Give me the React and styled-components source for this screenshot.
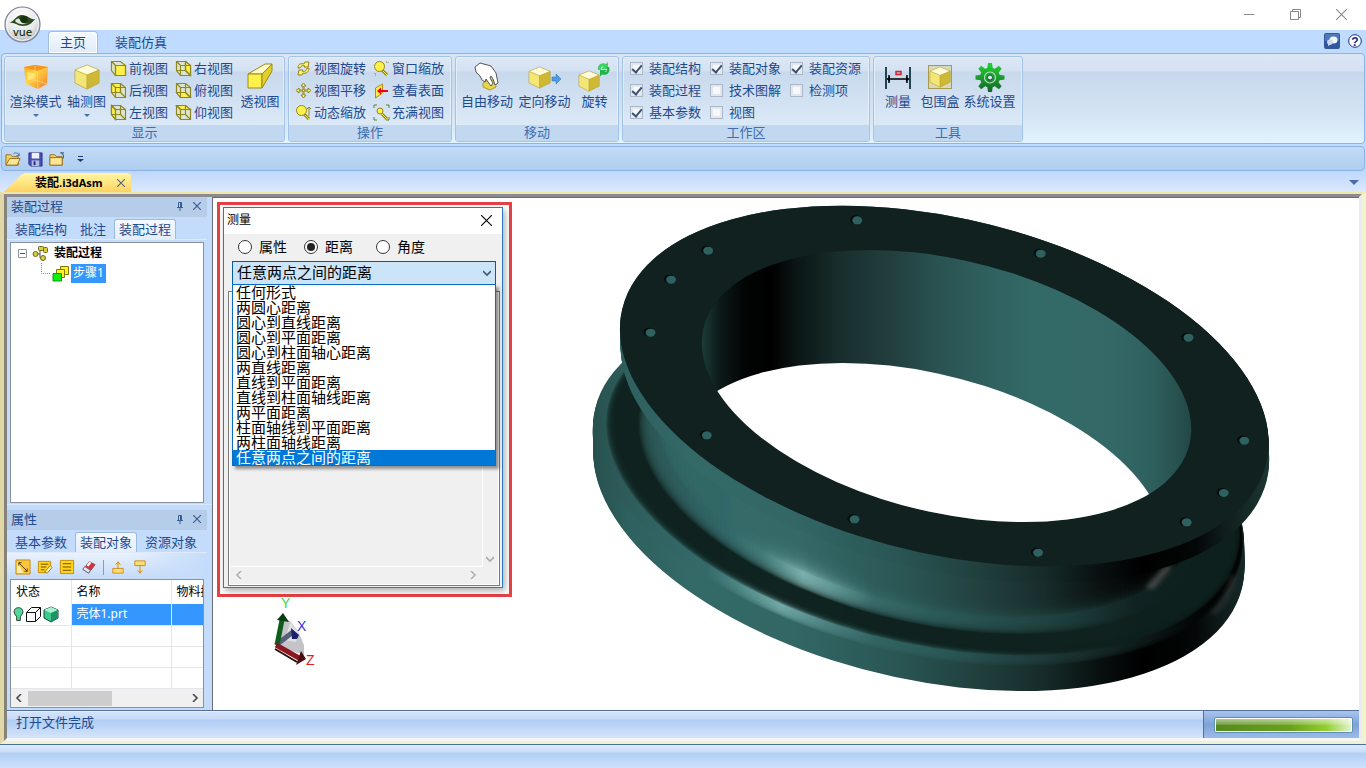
import React, { useState } from "react";
import styled, { createGlobalStyle, css } from "styled-components";

const Global = createGlobalStyle`
  * { box-sizing: border-box; }
  body { margin: 0; background: #bfdbff; overflow: hidden; }
  body, button, input, select, table {
    font-family: "Noto Sans", "Noto Sans CJK SC", "Liberation Sans", sans-serif;
    font-size: 13px;
    line-height: 18px;
    color: #1e4a8f;
  }
  button { background: none; border: 0; padding: 0; margin: 0; }
  svg { display: block; flex: none; }
`;

/* ---------- window chrome ---------- */

const Window = styled.div`
  display: flex;
  flex-direction: column;
  height: 100vh;
  min-width: 1040px;
  position: relative;
`;

const TitleBar = styled.header`
  display: flex;
  justify-content: flex-end;
  align-items: center;
  height: 30px;
  flex: none;
  background: #fff;
  padding: 0 18px 2px 0;
  gap: 32px;
`;

const WindowButton = styled.button`
  display: grid;
  place-items: center;
  width: 14px;
  height: 14px;
`;

const AppButton = styled.button`
  position: absolute;
  left: 4px;
  top: 6px;
  width: 38px;
  height: 38px;
  z-index: 2;
`;

const TabRow = styled.nav`
  display: flex;
  align-items: flex-end;
  height: 23px;
  flex: none;
  padding: 0 4px 0 48px;
  background: #bfdbff;
`;

const RibbonTab = styled.button`
  height: 22px;
  padding: 0 11px 2px;
  margin-right: 5px;
  border-radius: 4px 4px 0 0;
  border: 1px solid transparent;
  border-bottom: 0;
  ${(p) =>
    p.$active &&
    css`
      background: linear-gradient(#f4f9ff, #e0ebf8);
      border-color: #9cbfe8;
      box-shadow: inset 0 0 0 1px #fdfeff;
    `}
`;

const TabTools = styled.div`
  display: flex;
  gap: 8px;
  margin-left: auto;
  padding-bottom: 4px;
`;

const Ribbon = styled.section`
  display: flex;
  align-items: flex-start;
  gap: 3px;
  height: 91px;
  flex: none;
  margin: 0 1px;
  padding: 2px;
  border: 1px solid #8db2e3;
  border-radius: 4px;
  background: linear-gradient(#dbe6f4 0, #d5e1f2 17px, #c7d8ed 18px, #d4e4f4 60px, #e2f4fe 90px);
`;

const Group = styled.section`
  display: flex;
  flex-direction: column;
  width: ${(p) => p.$width}px;
  height: 86px;
  flex: none;
  border: 1px solid #a3c3e8;
  border-radius: 3px;
  overflow: hidden;
  background: linear-gradient(#dde8f5 0, #d4e1f2 14px, #c8d9ed 15px, #dbe9f7 68px);
  box-shadow: inset 0 0 0 1px #e4eefa;
`;

const GroupBody = styled.div`
  display: flex;
  flex: 1;
  padding: 0 ${(p) => p.$pad ?? 4}px;
  align-items: flex-start;
`;

const GroupTitle = styled.h2`
  margin: 0;
  height: 16px;
  line-height: 14px;
  font-size: 13px;
  font-weight: 400;
  text-align: center;
  color: #3e6db0;
  background: #c1d8f0;
`;

const BigButton = styled.button`
  display: flex;
  flex-direction: column;
  align-items: center;
  width: ${(p) => p.$width}px;
  padding-top: 5px;
  white-space: nowrap;
  line-height: 18px;
`;

const Caret = styled.i`
  border: 3px solid transparent;
  border-top-color: #4b6ea6;
  border-bottom: 0;
  margin-top: 4px;
`;

const SmallGrid = styled.div`
  display: grid;
  grid-auto-flow: column;
  grid-template-rows: repeat(3, 22px);
  grid-auto-columns: ${(p) => p.$col}px;
`;

const SmallButton = styled.button`
  display: flex;
  align-items: center;
  gap: 2px;
  white-space: nowrap;
`;

const CheckLabel = styled.label`
  display: flex;
  align-items: center;
  gap: 6px;
  white-space: nowrap;
`;

const Check = styled.input.attrs({ type: "checkbox" })`
  appearance: none;
  margin: 0;
  width: 13px;
  height: 13px;
  border: 1px solid #abb6c6;
  background: #f6f8fb;
  box-shadow: inset 0 0 0 2px #e3e8ef;
  display: grid;
  justify-items: center;
  &:checked::after {
    content: "";
    width: 4px;
    height: 8px;
    border: solid #3f5272;
    border-width: 0 2px 2px 0;
    transform: rotate(40deg);
  }
`;

const QuickBar = styled.div`
  display: flex;
  align-items: center;
  gap: 6px;
  height: 25px;
  flex: none;
  margin: 2px 1px 0;
  padding: 0 3px;
  border: 1px solid #8db2e3;
  border-radius: 4px;
  background: linear-gradient(#c3dbf7, #aecdf0);
`;

const QuickButton = styled.button`
  width: 16px;
  height: 16px;
`;

const QuickMenu = styled.button`
  margin-left: 6px;
`;

const DocTabs = styled.div`
  display: flex;
  align-items: flex-end;
  height: 21px;
  flex: none;
  padding: 0 7px 0 4px;
  background: linear-gradient(#bed7fb, #dbe9fd);
`;

const DocTab = styled.div`
  display: flex;
  align-items: center;
  justify-content: space-between;
  width: 127px;
  height: 19px;
  padding: 0 6px 0 31px;
  background: linear-gradient(#fff6a4, #ffe27c 60%, #ffd062);
  clip-path: polygon(0 100%, 17px 2px, 21px 0, 124px 0, 100% 2px, 100% 100%);
  font: 700 12px/16px "Open Sans", "Noto Sans CJK SC", sans-serif;
  color: #000;
  white-space: nowrap;
  span { font-size: 11px; }
`;

const DocMenu = styled.button`
  margin: 0 0 7px auto;
  border: 5px solid transparent;
  border-top-color: #4a6aa8;
  border-bottom: 0;
`;

const Frame = styled.div`
  display: flex;
  flex: 1;
  flex-direction: column;
  min-height: 0;
  border: solid;
  border-width: 2px 4px 3px 4px;
  border-color: #eee8a8 #eff3cf #f0f2c8 #e2d7a6;
`;

const FrameInner = styled.main`
  display: flex;
  flex: 1;
  flex-direction: column;
  min-height: 0;
  border: solid;
  border-width: 3px;
  border-color: #8d8b91 #e9eaf4 #f4f6fa #85837c;
`;

const Workspace = styled.div`
  display: flex;
  flex: 1;
  min-height: 0;
`;

const Dock = styled.aside`
  display: flex;
  flex-direction: column;
  width: 205px;
  flex: none;
  background: #c4dcfb;
`;

const Pane = styled.section`
  display: flex;
  flex-direction: column;
  margin-right: 5px;
  ${(p) => (p.$grow ? "flex: 1; min-height: 0;" : "flex: none;")}
`;

const PaneHead = styled.div`
  display: flex;
  align-items: center;
  gap: 9px;
  height: 20px;
  padding: 0 6px 2px 4px;
  background: #b6cdea;
  h3 { margin: 0 auto 0 0; font-size: 13px; font-weight: 400; }
`;

const PaneTabs = styled.div`
  display: flex;
  align-items: flex-end;
  height: 23px;
  padding-left: 3px;
  border-bottom: 1px solid #dfeafa;
`;

const PaneTab = styled.button`
  height: 20px;
  padding: 0 4px 2px;
  border: 1px solid transparent;
  border-bottom: 0;
  border-radius: 3px 3px 0 0;
  white-space: nowrap;
  margin-right: 3px;
  ${(p) => p.$active && "background: linear-gradient(#f5f9ff, #e3edfb); border-color: #9bbbe2;"}
`;

const TreeBox = styled.div`
  flex: 1;
  margin: 2px 3px 0;
  padding: 0 7px;
  border: 1px solid #8a929c;
  background: #fff;
  color: #000;
  font-size: 12px;
`;

const TreeRow = styled.div`
  display: flex;
  align-items: center;
  gap: ${(p) => p.$gap}px;
  height: 20px;
  padding-left: ${(p) => p.$indent || 0}px;
  b { font-weight: 700; }
`;

const Selected = styled.span`
  background: #3397fd;
  color: #fff;
  padding: 0 2px;
  height: 19px;
  line-height: 18px;
`;

const Splitter = styled.div`
  height: 6px;
  margin-top: 1px;
  flex: none;
  border-top: 1px solid #dce9fb;
`;

const IconBar = styled.div`
  display: flex;
  align-items: center;
  gap: 6px;
  height: 26px;
  padding: 2px 0 0 8px;
  background: linear-gradient(90deg, transparent 60%, #c4dcfb), linear-gradient(#eaf2fd, #c5daf7);
`;

const Divider = styled.i`
  width: 1px;
  height: 15px;
  background: #7c9fcb;
`;

const TableBox = styled.div`
  height: 129px;
  margin: 0 3px 2px;
  border: 1px solid #8a929c;
  background: #fff;
  overflow: hidden;
  display: flex;
  flex-direction: column;
`;

const TableClip = styled.div`
  flex: 1;
  overflow: hidden;
`;

const Table = styled.table`
  table-layout: fixed;
  width: 279px;
  border-collapse: collapse;
  font-size: 12px;
  color: #000;
  th, td {
    height: 21px;
    padding: 0 5px;
    text-align: left;
    font-weight: 400;
    font-size: 12px;
    white-space: nowrap;
    border: solid #e3e6ea;
    border-width: 0 1px 1px 0;
  }
  th { height: 24px; border-bottom: 0; }
`;

const SelCell = styled.td`
  background: #3397fd;
  color: #fff;
`;

const StateCell = styled.td`
  && { padding: 0 2px; }
  div { display: flex; gap: 1px; }
`;

const ScrollX = styled.div`
  display: flex;
  align-items: center;
  justify-content: space-between;
  height: ${(p) => p.$h}px;
  padding: 0 4px;
  background: #f0f0f0;
`;

const Thumb = styled.div`
  width: 84px;
  height: 15px;
  margin: 0 auto 0 5px;
  background: #cdcdcd;
`;

const Viewport = styled.section`
  position: relative;
  flex: 1;
  min-width: 0;
  background: #fff;
  border: solid #6b6b78;
  border-width: 1px 0 0 1px;
  overflow: hidden;
`;

const Scene = styled.svg`
  width: 100%;
  height: 100%;
`;

const StatusBar = styled.footer`
  display: flex;
  height: 28px;
  flex: none;
  border-top: 1px solid #54709b;
  background: linear-gradient(#f4f8fe 0, #d3e3fa 1px, #c5dbf8 8px, #afcdf4 9px, #d6e5fb 27px);
`;

const StatusText = styled.span`
  flex: 1;
  padding: 2px 9px;
`;

const StatusEnd = styled.div`
  width: 156px;
  padding: 6px 6px 0 10px;
  border-left: 1px solid #54709b;
  background: linear-gradient(#a9c4ee, #7ea2d8 50%, #9dbbe9);
`;

const Progress = styled.progress`
  appearance: none;
  display: block;
  width: 100%;
  height: 16px;
  border: 1px solid #5b91b6;
  border-radius: 2px;
  background: #fff;
  padding: 1px;
  &::-webkit-progress-bar { background: #fff; }
  &::-webkit-progress-value {
    background: linear-gradient(#ffffff88, #ffffff33 45%, transparent 50%),
      linear-gradient(90deg, #568a1c, #69a11c 55%, #93cf30 82%, #e3f4cc);
  }
`;

const BottomBar = styled.div`
  height: 24px;
  flex: none;
  border-top: 1px solid #4e709f;
  background: linear-gradient(#dce8fb 0, #cbdff8 7px, #b0cef5 8px, #d2e3fb 24px);
`;

/* ---------- measure dialog ---------- */

const Highlight = styled.div`
  position: absolute;
  left: 4px;
  top: 4px;
  padding: 3px;
  border: 3px solid #e84044;
`;

const Dialog = styled.section`
  display: flex;
  flex-direction: column;
  width: 280px;
  height: 381px;
  margin: -1px 3px 3px 0;
  border: 1px solid #2a7ac2;
  background: #f0f0f0;
  box-shadow: 2px 3px 7px #0005;
  color: #000;
`;

const DialogHead = styled.div`
  display: flex;
  align-items: center;
  justify-content: space-between;
  height: 26px;
  padding: 0 10px 2px 3px;
  background: #fff;
  h3 { margin: 0; font-size: 12px; font-weight: 400; }
`;

const Radios = styled.div`
  display: flex;
  height: 27px;
  padding: 0 0 2px 14px;
`;

const RadioLabel = styled.label`
  display: flex;
  align-items: center;
  gap: 7px;
  width: ${(p) => p.$width}px;
  font-size: 14px;
  color: #000;
`;

const Radio = styled.input.attrs({ type: "radio" })`
  appearance: none;
  width: 14px;
  height: 14px;
  margin: 0;
  border: 1px solid #333;
  border-radius: 50%;
  background: #fff;
  display: grid;
  place-items: center;
  &:checked::after {
    content: "";
    width: 8px;
    height: 8px;
    border-radius: 50%;
    background: #222;
  }
`;

const Combo = styled.div`
  position: relative;
  height: 24px;
  margin: 0 6px 0 8px;
  select {
    appearance: none;
    width: 100%;
    height: 24px;
    padding: 0 4px 2px;
    border: 1px solid #0a5a9e;
    border-radius: 0;
    background: #cce4f7;
    color: #000;
    font-size: 15px;
  }
  > svg { position: absolute; right: 5px; top: 8px; pointer-events: none; }
`;

const Options = styled.ul`
  position: absolute;
  z-index: 3;
  left: 0;
  right: 0;
  top: 23px;
  margin: 0;
  padding: 0;
  list-style: none;
  border: 1px solid #0a6cbc;
  background: #fff;
  box-shadow: 3px 3px 3px #0006;
`;

const Option = styled.li`
  height: 15px;
  padding: 0 3px;
  font-size: 15px;
  line-height: 15px;
  color: ${(p) => (p.$on ? "#fff" : "#000")};
  background: ${(p) => (p.$on ? "#0078d7" : "transparent")};
`;

const ResultBox = styled.div`
  display: flex;
  flex-direction: column;
  flex: 1;
  margin: 6px 2px 1px 4px;
  padding: 2px;
  border: 1px solid #7a7a7a;
  box-shadow: inset 0 0 0 1px #fff;
`;

const ResultRow = styled.div`
  display: flex;
  flex: 1;
  align-items: flex-end;
  justify-content: flex-end;
`;

const ResultArea = styled.div`
  flex: 1;
  align-self: stretch;
  border: solid #fff;
  border-width: 0 1px 1px 0;
`;

const ResultScroll = styled.div`
  padding: 0 3px 4px;
`;

const ResultScrollEnd = styled.span`
  margin-right: 16px;
`;

/* ---------- icons ---------- */

const olive = "#8f8620";

const FACES = {
  front: "5.5,5.5 15.5,5.5 15.5,15.5 5.5,15.5",
  back: "1.5,1.5 10.5,1.5 10.5,10.5 1.5,10.5",
  left: "1.5,1.5 5.5,5.5 5.5,15.5 1.5,10.5",
  right: "10.5,1.5 15.5,5.5 15.5,15.5 10.5,10.5",
  bottom: "1.5,10.5 10.5,10.5 15.5,15.5 5.5,15.5",
  top: "1.5,1.5 10.5,1.5 15.5,5.5 5.5,5.5",
};

const ViewIcon = ({ face }) => (
  <svg width="17" height="17" viewBox="0 0 17 17" fill="none" stroke={olive} strokeWidth="1.2">
    <path d="M1.500 1.500H10.500L15.500 5.500V15.500H5.500L1.500 10.500Z" fill="#dce6cf" />
    <polygon points={FACES[face]} fill="#fff04a" />
    {face !== "front" && <path d="M1.500 10.500H10.500V1.500M10.500 10.500L15.500 15.500" />}
    <path d="M5.500 15.500V5.500H15.500M1.500 1.500L5.500 5.500" />
  </svg>
);

const CubeShape = ({ x = 0, y = 0, s = 1 }) => (
  <g transform={`translate(${x} ${y}) scale(${s})`} stroke="#b5a23c" strokeWidth=".5" strokeLinejoin="round">
    <path d="M12 0L24 5V18L12 24L0 18V5Z" fill="#e5d44c" />
    <path d="M12 0L24 5L12 10L0 5Z" fill="#fffbd8" />
    <path d="M0 5L12 10V24L0 18Z" fill="#f3e674" />
    <path d="M24 5L12 10V24L24 18Z" fill="#cfb834" />
  </g>
);

const Big = ({ children, w = 30 }) => (
  <svg width={w} height="30" viewBox={`0 0 ${w} 30`} fill="none">{children}</svg>
);

const RenderIcon = () => (
  <Big>
    <defs>
      <linearGradient id="flame" x2="1" y2="1">
        <stop offset="0" stopColor="#fba61e" />
        <stop offset=".4" stopColor="#ffd648" />
        <stop offset=".7" stopColor="#f9a838" />
        <stop offset="1" stopColor="#ee7a35" />
      </linearGradient>
    </defs>
    <path d="M3 5L14 3L27 5L26 22L17 27L5 22Z" fill="url(#flame)" />
    <path d="M3 5L16 9L27 5L14 3Z" fill="#f8941c" />
    <path d="M16 9L17 27M5 22L14 18L26 22M14 18V4" stroke="#ffd870" strokeWidth=".7" />
    <path d="M6 10L14 12L13 17L7 18Z" fill="#fff08a" opacity=".7" />
  </Big>
);
const AxonIcon = () => <Big><CubeShape x={3} y={3} /></Big>;
const PerspectiveIcon = () => (
  <Big>
    <g stroke="#9a8a18" strokeLinejoin="round">
      <path d="M3 12L20 2H27L17 12Z" fill="#fffbc8" />
      <path d="M3 12H17V26H3Z" fill="#fff04a" />
      <path d="M17 12L27 2V9L17 26Z" fill="#e3cf2c" />
    </g>
  </Big>
);
const FreeMoveIcon = () => (
  <Big>
    <path d="M11 21L16 18H21L24 21V25L18 28L11 25Z" fill="#e8d648" stroke="#b09b30" />
    <path d="M3 5L8 1L19 4L24 11L26 21L23 23L21 17L19 14L18 16L21 21L19 24L16 20L14 17L13 20L10 18L8 14L4 10Z" fill="#fff" stroke="#555" strokeLinejoin="round" />
  </Big>
);
const DirMoveIcon = () => (
  <Big w={36}>
    <CubeShape x={2} y={5} s={0.88} />
    <path d="M25 15H29V12L34 17L29 22V19H25Z" fill="#4d9be0" stroke="#3579bd" strokeWidth=".6" />
  </Big>
);
const RotateIcon = () => (
  <Big w={34}>
    <CubeShape x={1} y={9} s={0.84} />
    <path d="M20 8C19 3 24 0 28 2L30 0V7H23L26 4.500C24 4 22 5 23 8Z" fill="#3fd064" />
    <path d="M31 5C33 10 29 14 24 12.500L22 14.500V8H29L26.500 10C29 10 30 8 28.500 5Z" fill="#1fb445" />
  </Big>
);
const MeasureIcon = () => (
  <Big w={28}>
    <path d="M2 5V27M26 5V27" stroke="#1f4650" strokeWidth="2" />
    <path d="M3 17H25M5 13V21M23 13V21" stroke="#000" strokeWidth="1.500" />
    <path d="M3 17L6 14V20ZM25 17L22 14V20Z" fill="#000" />
    <path d="M12 9.500H17V12.500H12Z" fill="#c8b8a8" stroke="#d0213a" strokeWidth="1.500" />
  </Big>
);
const BoxIcon = () => (
  <Big>
    <rect x="3.500" y="3.500" width="23" height="23" fill="#d6d9bc" stroke="#a89a50" />
    <CubeShape x={5} y={5} s={0.84} />
  </Big>
);
const GearIcon = () => (
  <Big>
    <defs>
      <linearGradient id="gearFill" gradientUnits="userSpaceOnUse" x1="0" x2="0" y1="0" y2="30">
        <stop offset="0" stopColor="#23d832" />
        <stop offset="1" stopColor="#14642a" />
      </linearGradient>
      <mask id="gearMask" maskUnits="userSpaceOnUse" x="0" y="0" width="30" height="31">
        {[0, 45, 90, 135, 180, 225, 270, 315].map((a) => (
          <path key={a} d="M12 8L13 1H17L18 8Z" fill="#fff" transform={`rotate(${a} 15 15.500)`} />
        ))}
        <circle cx="15" cy="15.500" r="10" fill="#fff" />
      </mask>
    </defs>
    <rect width="30" height="31" fill="url(#gearFill)" mask="url(#gearMask)" />
    <circle cx="15" cy="15.500" r="5.500" stroke="#b9dcc0" strokeWidth="1.200" />
    <circle cx="15" cy="15.500" r="2.500" fill="#dbe7f3" stroke="#0c5c28" />
  </Big>
);

const Small = ({ children, size = 17 }) => (
  <svg width={size} height={size} viewBox="0 0 17 17" fill="none">{children}</svg>
);

const RotateViewIcon = () => (
  <Small>
    <g fill="#fff27a" stroke={olive} strokeLinejoin="round">
      <path d="M3 8C3 4 6 3 9 4L10 2L14 2L13 7L9 7L10 6C7 5 6 6 5 8Z" />
      <path d="M14 8C14 12 11 14 8 13L7 15H3L4 10H8L7 11C10 12 11 11 12 8Z" />
    </g>
  </Small>
);
const PanIcon = () => (
  <Small>
    <path d="M8.500 1L11 4H9V8H13V6L16 8.500L13 11V9H9V13H11L8.500 16L6 13H8V9H4V11L1 8.500L4 6V8H8V4H6Z" fill="#fff27a" stroke={olive} strokeLinejoin="round" />
  </Small>
);
const ZoomIcon = ({ kind }) => (
  <Small>
    <path d="M9 10L14 15" stroke={olive} strokeWidth="3" />
    <path d="M9 10L14 15" stroke="#ffe94a" strokeWidth="1" />
    <circle cx={kind === "fit" ? 7 : 6.5} cy={kind === "fit" ? 7 : 6.5} r={kind === "fit" ? 3 : 5} fill="#fff04a" stroke={olive} />
    {kind !== "fit" && <path d="M4 5L6 3" stroke="#fff" />}
    {kind === "window" && <path d="M13 2H15V4M2 13V15H4" stroke={olive} strokeDasharray="1 1" />}
    {kind === "dynamic" && <path d="M14 3V12M12 5L14 3L16 5" stroke={olive} />}
    {kind === "fit" && <path d="M1 4V1H4M13 1H16V4M16 13V16H13M4 16H1V13" stroke="#5d7f3a" />}
  </Small>
);
const FaceIcon = () => (
  <Small>
    <path d="M2.500 6L9.500 2V11L2.500 16Z" fill="#ffe94a" stroke="#b38a10" />
    <path d="M6 9H15" stroke="#f00010" strokeWidth="1.800" />
    <path d="M4 9L8 5.500V12.500Z" fill="#f00010" />
  </Small>
);

const FolderIcon = ({ open }) => (
  <Small size={16}>
    <path d="M1 4H6L8 6H14V15H1Z" fill="#f4cf63" stroke="#94701c" />
    <path d={open ? "M1 15L5 8H16L13 15Z" : "M1 7H14V15H1Z"} fill="#ffe596" stroke="#94701c" />
    {open ? <path d="M9 3C11 1 14 2 15 5M15 2V5H12" stroke="#4b6d9e" /> : <path d="M12 2H16M13 2C15 3 16 5 15 8" stroke="#2c466d" />}
  </Small>
);
const SaveIcon = () => (
  <Small size={16}>
    <path d="M2 2H16V16H4L2 14Z" fill="#4551b5" stroke="#2b3180" />
    <path d="M5 2H13V8H5Z" fill="#eef2fb" />
    <path d="M5 10H13V16H5Z" fill="#b4bce4" />
    <path d="M7 11H9V15H7Z" fill="#262c70" />
  </Small>
);
const MoreIcon = () => (
  <svg width="7" height="8" viewBox="0 0 7 8"><path d="M1 1.500H6" stroke="#1c3d74" /><path d="M0 4H7L3.500 7Z" fill="#1c3d74" /></svg>
);

const CrossIcon = ({ size = 8, color = "#3c5c93", width = 1.5 }) => (
  <svg width={size} height={size} viewBox="0 0 10 10" stroke={color} strokeWidth={width}><path d="M0 0L10 10M10 0L0 10" /></svg>
);
const PinIcon = () => (
  <svg width="8" height="9" viewBox="0 0 8 9" fill="none" stroke="#3c5c93"><path d="M2.500 5V.5H5.500V5M1 5.500H7M4 6V9M4.500 1V5" /></svg>
);
const CHEVRONS = { left: "M6 0L2 4L6 8", right: "M2 0L6 4L2 8", down: "M0 2L4 6L8 2" };
const Chevron = ({ dir = "left", color = "#4a4a4a" }) => (
  <svg width="8" height="8" viewBox="0 0 8 8" fill="none" stroke={color} strokeWidth="1.600"><path d={CHEVRONS[dir]} /></svg>
);

const AppLogo = () => (
  <svg width="38" height="38" viewBox="0 0 38 38">
    <defs>
      <radialGradient id="orb" cx=".45" cy=".3" r=".75">
        <stop offset="0" stopColor="#fff" />
        <stop offset=".6" stopColor="#e7e8e9" />
        <stop offset="1" stopColor="#a9acb5" />
      </radialGradient>
    </defs>
    <circle cx="18.500" cy="18.500" r="17.500" fill="url(#orb)" stroke="#7b7f92" strokeWidth="1.200" />
    <circle cx="18.500" cy="18.500" r="16" fill="none" stroke="#fff" opacity=".8" />
    <path d="M5 17C11 15 12 9 18 9C24 9 26 14 31 13C28 17 25 20 19 20C13 20 11 16 5 17Z" fill="#2b4a22" />
    <path d="M11 15C13 12 15 12 16 14C17 17 21 18 24 17C20 19 14 19 11 15Z" fill="#dfe5d8" />
    <circle cx="20" cy="13.500" r="3.500" fill="#17300f" />
    <text x="18.500" y="29.500" textAnchor="middle" fontFamily="Open Sans, sans-serif" fontWeight="600" fontSize="11" fill="#1f3a17">vue</text>
  </svg>
);

const ChatIcon = () => (
  <svg width="16" height="16" viewBox="0 0 16 16">
    <rect width="16" height="16" rx="2" fill="#31589f" />
    <rect x="1" y="1" width="14" height="7" rx="1" fill="#5079ba" />
    <ellipse cx="9.500" cy="7" rx="4" ry="3.500" fill="#f3f7fd" />
    <ellipse cx="6" cy="9" rx="3" ry="2.500" fill="#c8daf2" />
    <path d="M4 10L4 13L8 11Z" fill="#c8daf2" />
  </svg>
);
const HelpIcon = () => (
  <svg width="14" height="16" viewBox="0 0 14 16">
    <circle cx="7" cy="8" r="6.300" fill="#fff" stroke="#14327c" />
    <text x="7" y="12.500" textAnchor="middle" fontFamily="Liberation Sans, sans-serif" fontWeight="700" fontSize="12" fill="#0e2c86">?</text>
  </svg>
);

const NodesIcon = () => (
  <Small size={17}>
    <path d="M3 9H8M8 4V13M8 4H12M8 13H11" stroke="#555" />
    <g fill="#d9cf3a" stroke="#6e671a"><circle cx="3.500" cy="9" r="2.500" /><rect x="6.500" y="1.500" width="5" height="4" rx="1" /><rect x="11.500" y="2.500" width="4" height="5" rx="1" /><circle cx="11" cy="13" r="2.500" /></g>
  </Small>
);
const StepIcon = () => (
  <Small size={17}>
    <g stroke="#7d7a10"><path d="M8.500 1.500H16.500V9.500H8.500Z" fill="#fff21c" /><path d="M4.500 4.500H12.500V12.500H4.500Z" fill="#fff21c" /><path d="M1 8.500H9.500V16H1Z" fill="#0df20d" stroke="#1c8a1c" /></g>
  </Small>
);
const ExpandBox = () => (
  <svg width="9" height="9" viewBox="0 0 9 9" fill="#fff" stroke="#8896a8"><path d="M.5.5H8.500V8.500H.5Z" /><path d="M2 4.500H7" stroke="#34518b" /></svg>
);

const NoteIcon = ({ kind }) => (
  <Small size={16}>
    {kind === "link" && (
      <g><path d="M1 1H16V16H1Z" fill="#f9c63d" stroke="#c98a12" /><path d="M2 2L9 15H2Z" fill="#fff0a8" /><path d="M4 4L13 13M4 4H7M4 4V7M13 13H10M13 13V10" stroke="#5a3b08" /></g>
    )}
    {kind === "edit" && (
      <g><path d="M1.500 2.500H14.500V9L9 14.500H1.500Z" fill="#ffd41a" stroke="#c58b00" /><path d="M4 5.500H12M4 8.500H10M4 11.500H8" stroke="#6b4a00" /><path d="M8 14L14 7L16 9L11 15Z" fill="#f6efb0" stroke="#9c7a1a" /></g>
    )}
    {kind === "list" && (
      <g><path d="M1.500 1.500H15.500V15.500H1.500Z" fill="#ffd41a" stroke="#c58b00" /><path d="M4 5H13M4 8.500H13M4 12H13" stroke="#6b4a00" /></g>
    )}
    {kind === "erase" && (
      <g strokeLinejoin="round"><path d="M2 11L9 3L15 6L8 15Z" fill="#d0353a" stroke="#93403a" /><path d="M6 7L9 3L11 4L8 8Z" fill="#fff" /><path d="M2 11L4 8L10 12L8 15Z" fill="#e8e9f2" stroke="#6a6a90" /></g>
    )}
    {kind === "up" && <path d="M3 15V10H14V15ZM8.500 10V3M6 6L8.500 3L11 6" fill="#ffdf6d" stroke="#d08a1a" />}
    {kind === "down" && <path d="M3 2H14V7H3ZM8.500 7V15M6 12L8.500 15L11 12" fill="#ffdf6d" stroke="#d08a1a" />}
  </Small>
);

const StateIcons = () => (
  <div>
    <svg width="11" height="17" viewBox="0 0 12 17"><path d="M6 1C2 1 0 5 2 8L4 11V15H8V11L10 8C12 5 10 1 6 1Z" fill="#55d69a" stroke="#1c3b2e" /></svg>
    <svg width="17" height="17" viewBox="0 0 17 17" fill="#fff" stroke="#111"><path d="M1.500 6.500L6.500 1.500H15.500V10.500L10.500 15.500H1.500Z" /><path d="M1.500 6.500H10.500V15.500M10.500 6.500L15.500 1.500" fill="none" /></svg>
    <svg width="16" height="17" viewBox="0 0 16 17" stroke="#174b38"><path d="M8 1L15 4V12L8 16L1 12V4Z" fill="#3cc98c" /><path d="M8 1L15 4L8 7L1 4Z" fill="#a9f0d0" stroke="none" /><path d="M15 4V12L8 16V7Z" fill="#209364" stroke="none" /></svg>
  </div>
);

/* ---------- 3D scene ---------- */

const FULL = { rx: 764, ry: 490 };

const Disc = ({ d = 0, s = 1, dx = 0, ...rest }) => (
  <ellipse
    rx={FULL.rx * s}
    ry={FULL.ry * s}
    transform={`translate(${816 + dx - 0.153 * d} ${573 + d}) rotate(23.3)`}
    {...rest}
  />
);

const steps = (n, fn) => Array.from({ length: n }, (_, i) => fn(i / (n - 1), i));

const GRADIENTS = {
  side: [[30, "#27504e"], [110, "#2e615f"], [250, "#336967"], [480, "#326765"], [700, "#2a5755"], [880, "#21413f"], [1040, "#162b2a"], [1160, "#091110"], [1260, "#000000"], [1380, "#040707"], [1450, "#101f1e"], [1545, "#1b3634"]],
  fillet: [[30, "#274f4d"], [150, "#2c5957"], [330, "#33696a"], [410, "#447d7b"], [500, "#7db3b0"], [560, "#669d9a"], [660, "#396c6a"], [800, "#2c5c5a"], [950, "#264d4b"], [1100, "#1e3e3c"], [1250, "#122423"], [1400, "#0f1e1d"], [1490, "#000000"]],
  edge: [[30, "#285250"], [150, "#2f605e"], [280, "#34696a"], [370, "#558e8b"], [450, "#75aba8"], [550, "#4f8482"], [660, "#336563"], [820, "#2b5957"], [1000, "#213f3e"], [1130, "#182e2d"], [1260, "#0e1b1a"], [1390, "#020404"], [1490, "#000000"]],
  bore: [[274, "#1c3a38"], [315, "#0c1818"], [370, "#020404"], [430, "#000000"], [480, "#0a1413"], [580, "#182e2d"], [700, "#223f3e"], [800, "#295251"], [900, "#2e5f5d"], [1020, "#336a68"], [1200, "#336866"], [1290, "#2d5e5c"], [1369, "#234846"]],
};

const HOLES = [[620, 75], [286, 166], [203, 253], [157, 412], [283, 720], [614, 972], [1025, 1072], [1358, 981], [1441, 893], [1487, 736], [1362, 427], [1031, 175]];

/* Discs painted through a clip so that one horizontal shading runs across all of them. */
const ShadedDiscs = ({ fill, opacity = 1, children }) =>
  children.map((p, i) => {
    const id = `${fill}-${Math.round(p.d * 10)}-${i}`;
    return (
      <g key={id}>
        <clipPath id={id}><Disc {...p} /></clipPath>
        <rect width="1600" height="1520" fill={`url(#${fill})`} clipPath={`url(#${id})`} opacity={opacity} />
      </g>
    );
  });

const Ring = () => (
  <g transform="translate(580 195) scale(.44643 .33333)">
    <defs>
      {Object.entries(GRADIENTS).map(([id, stops]) => (
        <linearGradient key={id} id={id} gradientUnits="userSpaceOnUse" x1="0" x2="1600">
          {stops.map(([x, c]) => <stop key={x} offset={x / 1600} stopColor={c} />)}
        </linearGradient>
      ))}
      <mask id="bodyMask" maskUnits="userSpaceOnUse" x="0" y="0" width="1600" height="1520">
        <rect width="1600" height="1520" fill="#fff" />
        <g clipPath="url(#boreTop)"><Disc d={339} s={0.753} dx={-3} fill="#000" /></g>
      </mask>
      <clipPath id="boreTop"><Disc s={0.753} dx={5} /></clipPath>
      <filter id="soft" x="-50%" y="-50%" width="200%" height="200%"><feGaussianBlur stdDeviation="7" /></filter>
    </defs>
    <g mask="url(#bodyMask)">
      <ShadedDiscs fill="side">{steps(20, (t) => ({ d: 372 - 72 * t, s: 1.002, dx: -12 * t }))}</ShadedDiscs>
      <ShadedDiscs fill="edge" opacity={0.3}>{steps(10, (t) => ({ d: 298 - 18 * t, s: 0.998 - 0.02 * t, dx: -12 + 8 * t }))}</ShadedDiscs>
      {steps(10, (t, i) => <Disc key={i} d={279 - 8 * t} s={0.976 - 0.024 * t} dx={-4 + 4 * t} fill="#112120" opacity=".32" />)}
      <ShadedDiscs fill="fillet" opacity={0.22}>{steps(14, (t) => ({ d: 264 - 14 * t, s: 0.885 - 0.045 * t }))}</ShadedDiscs>
      <ShadedDiscs fill="side" opacity={0.2}>{steps(14, (t) => ({ d: 240 - 60 * t, s: 0.836 - 0.01 * t }))}</ShadedDiscs>
      <path d="M1275 1180L1320 1112" stroke="#5c5c5c" strokeWidth="12" filter="url(#soft)" />
      <path d="M1418 1258C1448 1215 1458 1180 1464 1140" stroke="#3e4242" strokeWidth="6" fill="none" filter="url(#soft)" />
      <ShadedDiscs fill="side">{steps(14, (t) => ({ d: 51 - 51 * t, s: 0.998, dx: 9 - 9 * t }))}</ShadedDiscs>
      <Disc s={0.998} fill="#112120" />
      <g clipPath="url(#boreTop)"><rect x="260" y="150" width="1120" height="850" fill="url(#bore)" /></g>
    </g>
    {HOLES.map(([x, y]) => (
      <g key={x}>
        <ellipse cx={x - 3} cy={y - 1} rx="12" ry="13" fill="#060d0c" />
        <ellipse cx={x + 1} cy={y + 1} rx="11" ry="12" fill="#2e615f" />
      </g>
    ))}
  </g>
);

const Triad = () => (
  <g>
    <path d="M283 618L290 621L298 631L304 645L304 655L277 646Z" fill="#c3c3c8" />
    <path d="M290 622L299 633L296 642L285 640Z" fill="#e0e0e4" />
    <path d="M276 645L293 632" stroke="#56607a" strokeWidth="5" />
    <path d="M291 628L299 635L297 639L292 639Z" fill="#18206e" />
    <path d="M277 645L282 620" stroke="#0d5c1c" strokeWidth="5" />
    <path d="M277 620L283 613L289 622Z" fill="#073d10" />
    <path d="M276 645L299 658" stroke="#8d1720" strokeWidth="5" />
    <path d="M275 649L297 662" stroke="#2b0a0c" strokeWidth="2" />
    <path d="M301 651L306 659L296 665Z" fill="#4a0c10" />
    <g fontFamily="Liberation Sans, sans-serif" fontSize="14">
      <text x="281" y="608" fill="#3ad84a">Y</text>
      <text x="297" y="631" fill="#3434e0">X</text>
      <text x="306" y="665" fill="#e02424">Z</text>
    </g>
  </g>
);

/* ---------- content ---------- */

const VIEWS = [["前视图", "front"], ["后视图", "back"], ["左视图", "left"], ["右视图", "right"], ["俯视图", "bottom"], ["仰视图", "top"]];
const OPS = [
  ["视图旋转", <RotateViewIcon />], ["视图平移", <PanIcon />], ["动态缩放", <ZoomIcon kind="dynamic" />],
  ["窗口缩放", <ZoomIcon kind="window" />], ["查看表面", <FaceIcon />], ["充满视图", <ZoomIcon kind="fit" />],
];
const AREAS = [
  ["装配结构", true], ["装配过程", true], ["基本参数", true], ["装配对象", true],
  ["技术图解", false], ["视图", false], ["装配资源", true], ["检测项", false],
];
const DISTANCES = [
  "任何形式", "两圆心距离", "圆心到直线距离", "圆心到平面距离", "圆心到柱面轴心距离", "两直线距离",
  "直线到平面距离", "直线到柱面轴线距离", "两平面距离", "柱面轴线到平面距离", "两柱面轴线距离", "任意两点之间的距离",
];
const MODES = [["属性", 66], ["距离", 72], ["角度", 66]];

const Tool = ({ label, width, icon, menu }) => (
  <BigButton $width={width}>{icon}<span>{label}</span>{menu && <Caret />}</BigButton>
);

const PaneHeader = ({ title }) => (
  <PaneHead>
    <h3>{title}</h3>
    <button aria-label="固定"><PinIcon /></button>
    <button aria-label="关闭"><CrossIcon /></button>
  </PaneHead>
);

const MeasureDialog = () => {
  const [mode, setMode] = useState("距离");
  const [kind, setKind] = useState(DISTANCES[11]);
  return (
    <Highlight>
      <Dialog role="dialog" aria-label="测量">
        <DialogHead>
          <h3>测量</h3>
          <button aria-label="关闭"><CrossIcon size={11} color="#000" width={1} /></button>
        </DialogHead>
        <Radios>
          {MODES.map(([m, w]) => (
            <RadioLabel key={m} $width={w}>
              <Radio name="mode" checked={mode === m} onChange={() => setMode(m)} />{m}
            </RadioLabel>
          ))}
        </Radios>
        <Combo>
          <select aria-label="距离类型" value={kind} onChange={(e) => setKind(e.target.value)}>
            {DISTANCES.map((d) => <option key={d}>{d}</option>)}
          </select>
          <Chevron dir="down" color="#44586c" />
          <Options role="listbox" aria-label="距离类型">
            {DISTANCES.map((d) => (
              <Option key={d} role="option" aria-selected={d === kind} $on={d === kind} onClick={() => setKind(d)}>{d}</Option>
            ))}
          </Options>
        </Combo>
        <ResultBox>
          <ResultRow>
            <ResultArea />
            <ResultScroll><Chevron dir="down" color="#aaa" /></ResultScroll>
          </ResultRow>
          <ScrollX $h={16}>
            <Chevron color="#b0b0b0" />
            <ResultScrollEnd><Chevron dir="right" color="#b0b0b0" /></ResultScrollEnd>
          </ScrollX>
        </ResultBox>
      </Dialog>
    </Highlight>
  );
};

export default function App() {
  const [areas, setAreas] = useState(() => Object.fromEntries(AREAS));
  return (
    <Window>
      <Global />
      <TitleBar>
        <WindowButton aria-label="最小化"><svg width="11" height="11" viewBox="0 0 11 11" stroke="#888"><path d="M0 5.500H10" /></svg></WindowButton>
        <WindowButton aria-label="还原"><svg width="11" height="11" viewBox="0 0 11 11" fill="none" stroke="#888"><path d="M.5 2.500H8.500V10.500H.5ZM2.500 2V.5H10.500V8.500H9" /></svg></WindowButton>
        <WindowButton aria-label="关闭"><CrossIcon size={11} color="#888" width={1} /></WindowButton>
      </TitleBar>
      <AppButton aria-label="vue"><AppLogo /></AppButton>
      <TabRow>
        <RibbonTab $active>主页</RibbonTab>
        <RibbonTab>装配仿真</RibbonTab>
        <TabTools>
          <button aria-label="消息"><ChatIcon /></button>
          <button aria-label="帮助"><HelpIcon /></button>
        </TabTools>
      </TabRow>
      <Ribbon>
        <Group $width={281}>
          <GroupBody $pad={3}>
            <Tool label="渲染模式" width={55} icon={<RenderIcon />} menu />
            <Tool label="轴测图" width={47} icon={<AxonIcon />} menu />
            <SmallGrid $col={65}>
              {VIEWS.map(([label, face]) => <SmallButton key={label}><ViewIcon face={face} />{label}</SmallButton>)}
            </SmallGrid>
            <Tool label="透视图" width={40} icon={<PerspectiveIcon />} />
          </GroupBody>
          <GroupTitle>显示</GroupTitle>
        </Group>
        <Group $width={164}>
          <GroupBody $pad={6}>
            <SmallGrid $col={78}>
              {OPS.map(([label, icon]) => <SmallButton key={label}>{icon}{label}</SmallButton>)}
            </SmallGrid>
          </GroupBody>
          <GroupTitle>操作</GroupTitle>
        </Group>
        <Group $width={164}>
          <GroupBody $pad={2}>
            <Tool label="自由移动" width={58} icon={<FreeMoveIcon />} />
            <Tool label="定向移动" width={57} icon={<DirMoveIcon />} />
            <Tool label="旋转" width={43} icon={<RotateIcon />} />
          </GroupBody>
          <GroupTitle>移动</GroupTitle>
        </Group>
        <Group $width={248}>
          <GroupBody $pad={7}>
            <SmallGrid $col={80}>
              {AREAS.map(([label]) => (
                <CheckLabel key={label}>
                  <Check checked={areas[label]} onChange={() => setAreas({ ...areas, [label]: !areas[label] })} />{label}
                </CheckLabel>
              ))}
            </SmallGrid>
          </GroupBody>
          <GroupTitle>工作区</GroupTitle>
        </Group>
        <Group $width={150}>
          <GroupBody $pad={4}>
            <Tool label="测量" width={40} icon={<MeasureIcon />} />
            <Tool label="包围盒" width={44} icon={<BoxIcon />} />
            <Tool label="系统设置" width={55} icon={<GearIcon />} />
          </GroupBody>
          <GroupTitle>工具</GroupTitle>
        </Group>
      </Ribbon>
      <QuickBar>
        <QuickButton aria-label="打开"><FolderIcon open /></QuickButton>
        <QuickButton aria-label="保存"><SaveIcon /></QuickButton>
        <QuickButton aria-label="关闭文件"><FolderIcon /></QuickButton>
        <QuickMenu aria-label="更多"><MoreIcon /></QuickMenu>
      </QuickBar>
      <DocTabs>
        <DocTab><div>装配<span>.i3dAsm</span></div><button aria-label="关闭标签"><CrossIcon color="#5a6a86" /></button></DocTab>
        <DocMenu aria-label="文档列表" />
      </DocTabs>
      <Frame>
        <FrameInner>
          <Workspace>
            <Dock>
              <Pane $grow>
                <PaneHeader title="装配过程" />
                <PaneTabs>
                  <PaneTab>装配结构</PaneTab>
                  <PaneTab>批注</PaneTab>
                  <PaneTab $active>装配过程</PaneTab>
                </PaneTabs>
                <TreeBox>
                  <TreeRow $gap={5}><ExpandBox /><NodesIcon /><b>装配过程</b></TreeRow>
                  <TreeRow $gap={2} $indent={23}>
                    <svg width="9" height="20" viewBox="0 0 9 20" stroke="#888" fill="none" strokeDasharray="1 1"><path d="M.5 0V10.500H9" /></svg>
                    <StepIcon />
                    <Selected>步骤1</Selected>
                  </TreeRow>
                </TreeBox>
              </Pane>
              <Splitter />
              <Pane>
                <PaneHeader title="属性" />
                <PaneTabs>
                  <PaneTab>基本参数</PaneTab>
                  <PaneTab $active>装配对象</PaneTab>
                  <PaneTab>资源对象</PaneTab>
                </PaneTabs>
                <IconBar>
                  <button aria-label="关联"><NoteIcon kind="link" /></button>
                  <button aria-label="编辑"><NoteIcon kind="edit" /></button>
                  <button aria-label="列表"><NoteIcon kind="list" /></button>
                  <button aria-label="清除"><NoteIcon kind="erase" /></button>
                  <Divider />
                  <button aria-label="上移"><NoteIcon kind="up" /></button>
                  <button aria-label="下移"><NoteIcon kind="down" /></button>
                </IconBar>
                <TableBox>
                  <TableClip>
                    <Table>
                      <colgroup><col width="60" /><col width="100" /><col width="119" /></colgroup>
                      <thead><tr><th>状态</th><th>名称</th><th>物料描述</th></tr></thead>
                      <tbody>
                        <tr><StateCell><StateIcons /></StateCell><SelCell>壳体1.prt</SelCell><SelCell /></tr>
                        <tr><td /><td /><td /></tr>
                        <tr><td /><td /><td /></tr>
                        <tr><td /><td /><td /></tr>
                      </tbody>
                    </Table>
                  </TableClip>
                  <ScrollX $h={18}><Chevron /><Thumb /><Chevron dir="right" /></ScrollX>
                </TableBox>
              </Pane>
            </Dock>
            <Viewport>
              <Scene viewBox="213 198 1146 512" preserveAspectRatio="xMinYMin meet" role="img" aria-label="壳体1.prt">
                <Ring />
                <Triad />
              </Scene>
              <MeasureDialog />
            </Viewport>
          </Workspace>
          <StatusBar>
            <StatusText>打开文件完成</StatusText>
            <StatusEnd><Progress value="100" max="100" aria-label="进度" /></StatusEnd>
          </StatusBar>
        </FrameInner>
      </Frame>
      <BottomBar />
    </Window>
  );
}
